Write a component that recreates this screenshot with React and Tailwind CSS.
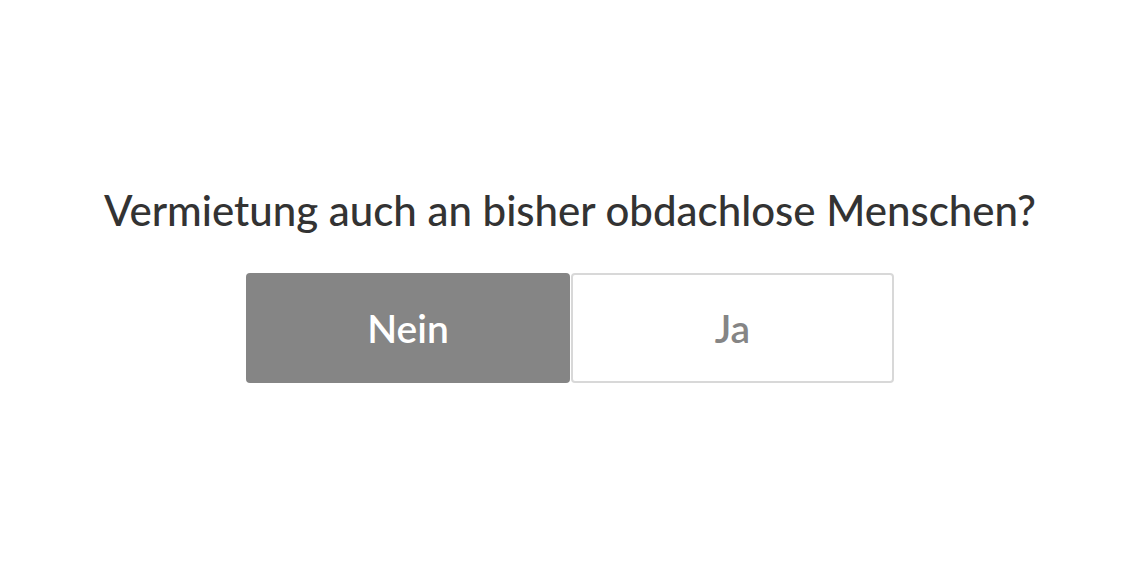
export default function App() {
  return (
    <div className="w-[1140px] h-[570px] bg-white flex flex-col items-center pt-[189px]" style={{ fontFamily: 'Lato, "Noto Sans", sans-serif' }}>
      <h1 className="text-[42px] font-medium text-[#333333] leading-none">
        Vermietung auch an bisher obdachlose Menschen?
      </h1>
      <div className="flex mt-[42px]">
        <button className="w-[324px] h-[110px] bg-[#858585] text-white text-[39px] font-semibold rounded-[4px]">
          Nein
        </button>
        <button className="w-[323px] h-[110px] bg-white text-[#858585] text-[39px] font-semibold rounded-[4px] border-2 border-[#d8d8d8] ml-px">
          Ja
        </button>
      </div>
    </div>
  )
}
